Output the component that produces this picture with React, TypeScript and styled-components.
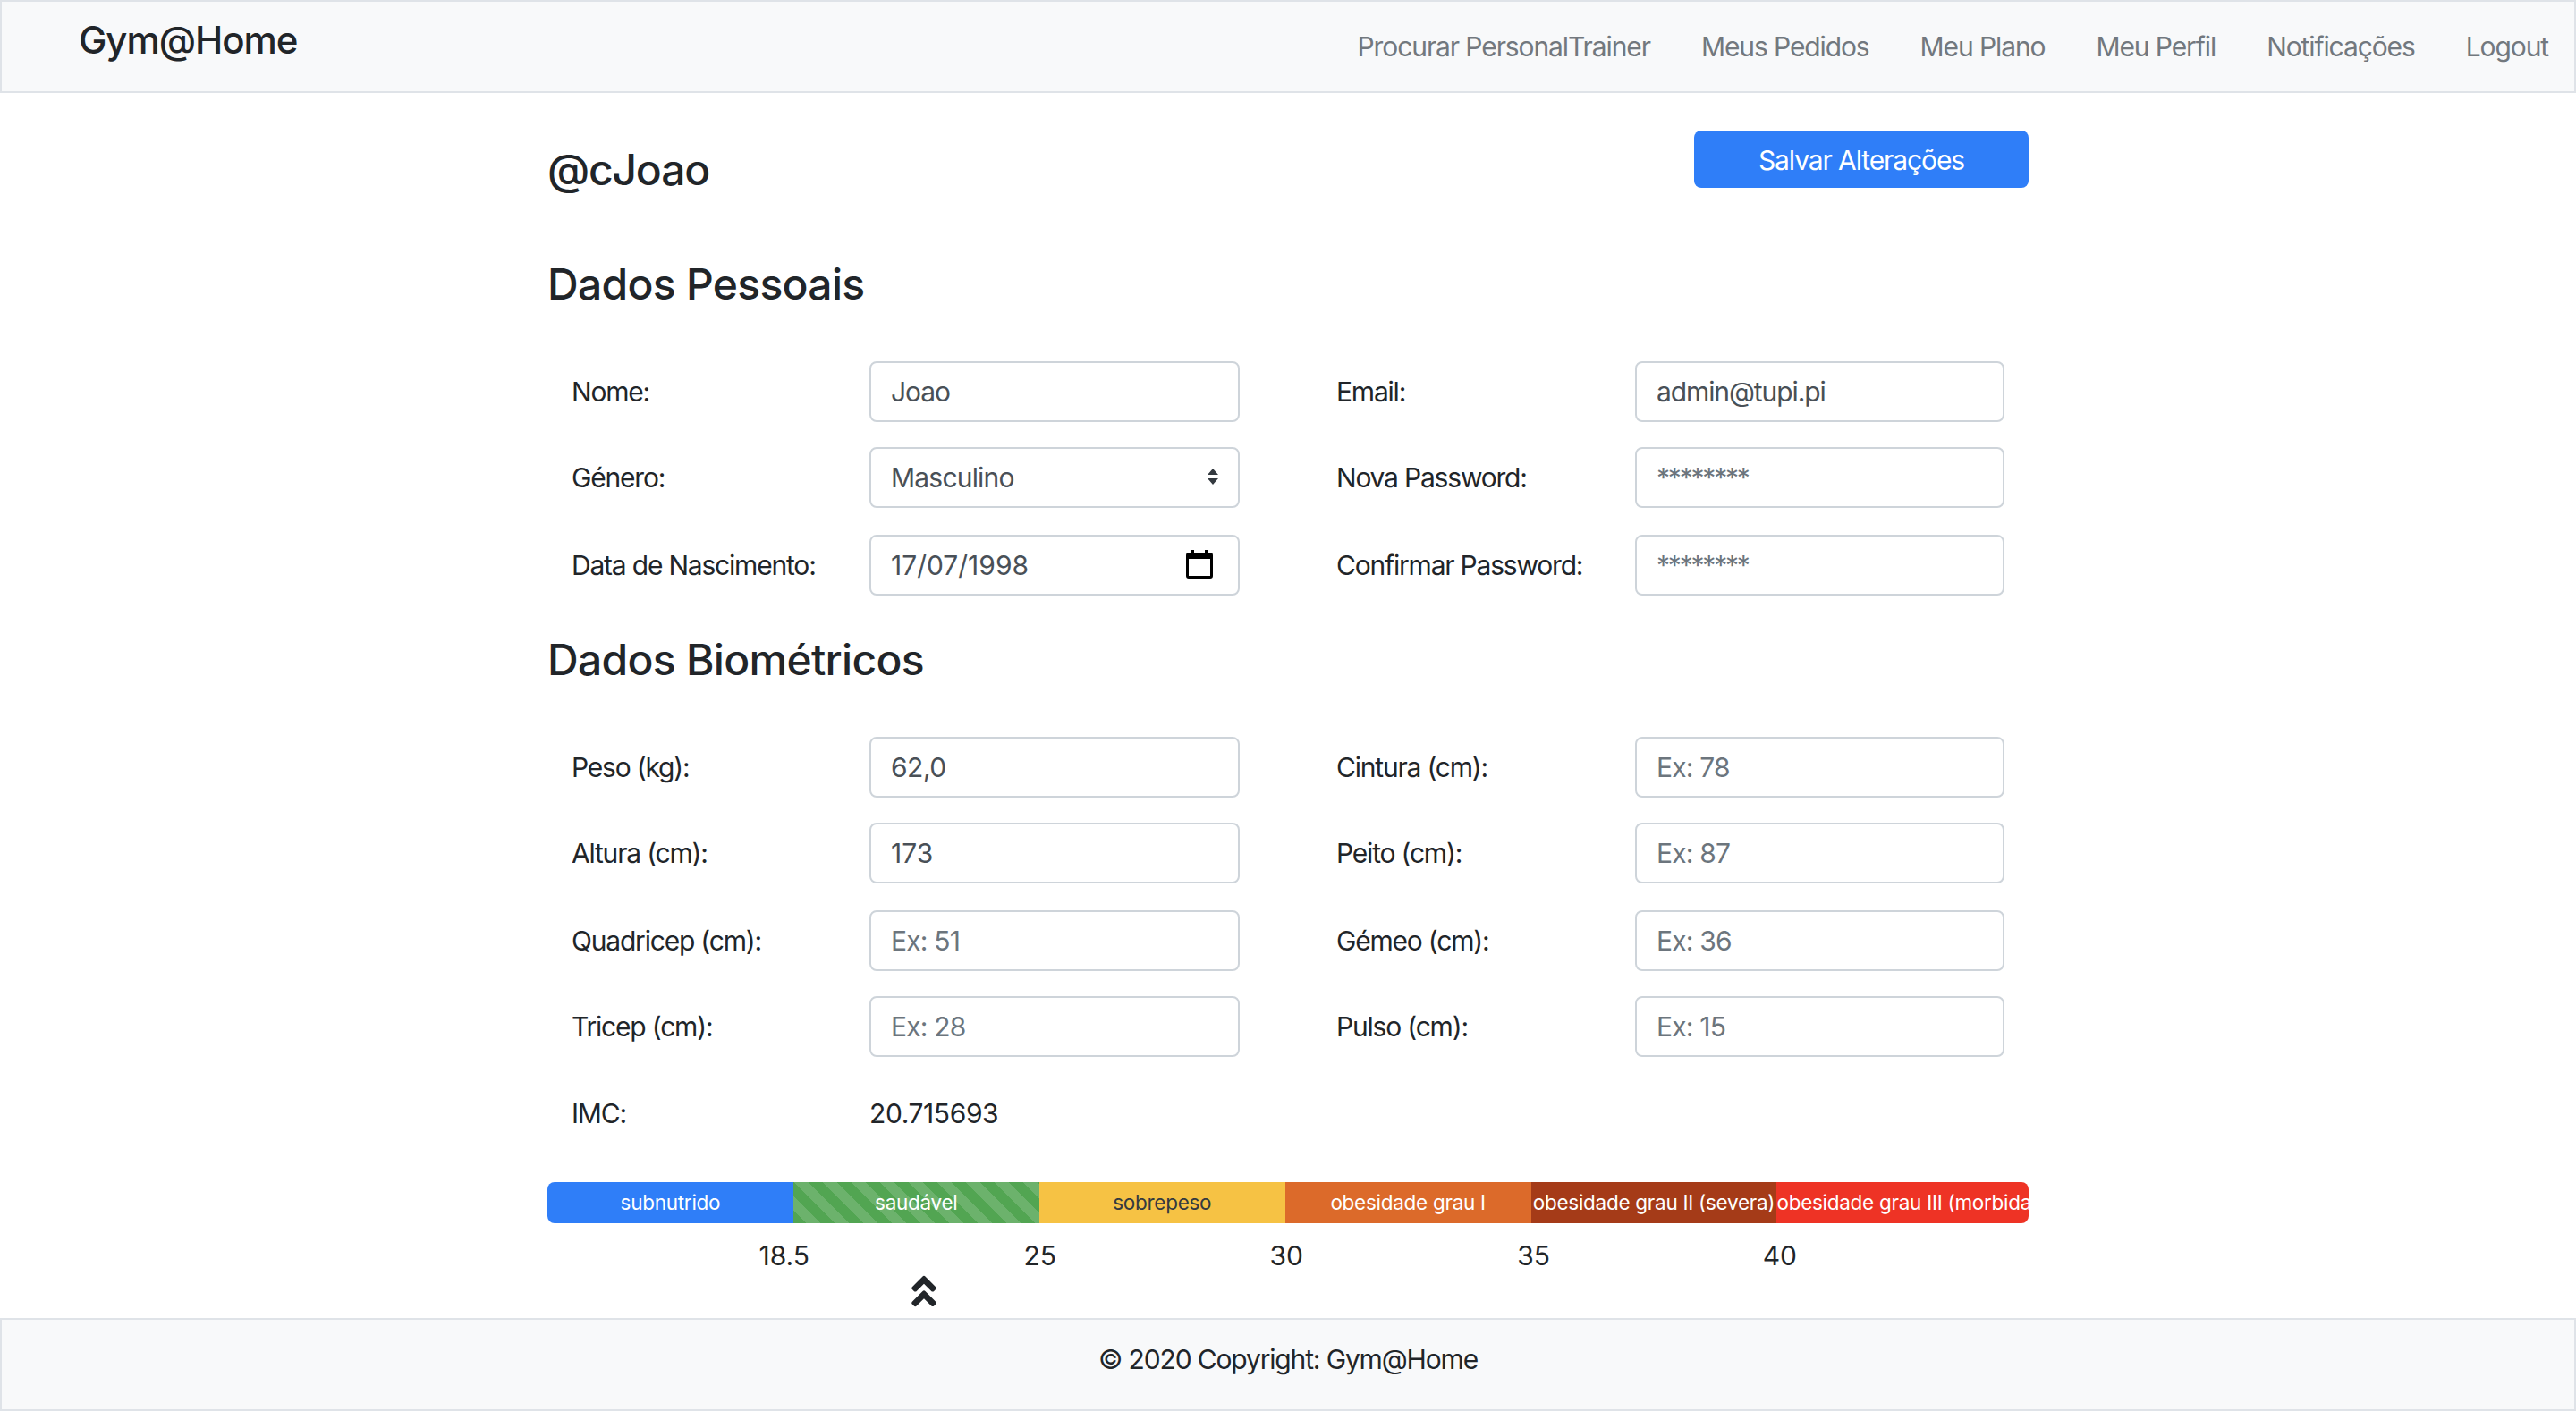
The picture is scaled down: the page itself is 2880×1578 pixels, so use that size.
import React from "react";
import styled, { createGlobalStyle } from "styled-components";
import { FaAngleDoubleUp } from "react-icons/fa";

const Global = createGlobalStyle`
  html, body { margin: 0; padding: 0; background: #fff; }
  body { font-family: Inter, "Liberation Sans", sans-serif; color: #212529; font-size: 30px; letter-spacing: -1.1px; }
  * { box-sizing: border-box; }
`;

const Page = styled.div`
  height: 1578px;
  display: flex;
  flex-direction: column;
`;

const Bar = styled.div`
  height: 104px;
  flex: none;
  background: #f8f9fa;
  border: 2px solid #dfe3e8;
`;

const NavBar = styled(Bar)`
  display: flex;
  justify-content: space-between;
  padding: 0 29px 0 86px;
`;

const Brand = styled.div`
  font-size: 42px;
  font-weight: 500;
  letter-spacing: -1.05px;
  line-height: 48px;
  margin-top: 19px;
`;

const NavList = styled.nav`
  display: flex;
  gap: 57px;
  margin-top: 30px;
`;

const NavLink = styled.a`
  line-height: 40px;
  color: #72787e;
`;

const Main = styled.main`
  flex: 1;
  width: 1656px;
  margin: 0 auto;
`;

const Head = styled.div`
  display: flex;
  justify-content: space-between;
  align-items: flex-start;
  padding-top: 42px;
  height: 184px;
`;

const UserName = styled.h1`
  margin: 14px 0 0;
  font-size: 48px;
  line-height: 60px;
  font-weight: 550;
  letter-spacing: -1.2px;
`;

const SaveButton = styled.button`
  width: 374px;
  height: 64px;
  border: 0;
  border-radius: 8px;
  background: #2f7ef8;
  color: #fff;
  font: 400 30px/64px Inter, "Liberation Sans", sans-serif;
  letter-spacing: -1.1px;
`;

const SectionTitle = styled.h2<{ $top: number }>`
  margin: ${(p) => p.$top}px 0 56px;
  height: 60px;
  font-size: 48px;
  line-height: 60px;
  font-weight: 550;
  letter-spacing: -0.7px;
`;

const FieldRow = styled.div<{ $top?: number }>`
  display: grid;
  grid-template-columns: 333px 414px 442px 413px;
  padding-left: 27px;
  margin-top: ${(p) => p.$top ?? 0}px;
  height: 68px;
  align-items: center;
`;

const Label = styled.label<{ $right?: boolean }>`
  line-height: 40px;
  white-space: nowrap;
  letter-spacing: -1.2px;
  margin-left: ${(p) => (p.$right ? "108px" : "0")};
`;

const Control = styled.div`
  position: relative;
  height: 68px;
`;

const fieldCss = `
  width: 100%;
  height: 68px;
  border: 2px solid #ced4da;
  border-radius: 8px;
  padding: 0 22px;
  background: #fff;
  color: #495057;
  font: 400 30px Inter, "Liberation Sans", sans-serif;
  outline: none;
  &::placeholder { color: #6c757d; opacity: 1; }
`;

const Input = styled.input<{ $spacing: number }>`
  ${fieldCss}
  letter-spacing: ${(p) => p.$spacing}px;
`;

const Select = styled.select`
  ${fieldCss}
  appearance: none;
  letter-spacing: -0.8px;
`;

const ControlIcon = styled.svg`
  position: absolute;
  pointer-events: none;
`;

const SelectArrows = styled(ControlIcon)`
  right: 22px;
  top: 24px;
  width: 16px;
  height: 18px;
`;

const CalendarIcon = styled(ControlIcon)`
  right: 30px;
  top: 17px;
  width: 30px;
  height: 32px;
`;

const ImcValue = styled.div`
  line-height: 40px;
  letter-spacing: -0.4px;
`;

const Progress = styled.div`
  display: grid;
  grid-template-columns: repeat(5, 16.6%) 1fr;
  height: 46px;
  margin-top: 43px;
  border-radius: 8px;
  overflow: hidden;
`;

const Segment = styled.div<{ $bg: string; $dark?: boolean; $striped?: boolean }>`
  background-color: ${(p) => p.$bg};
  ${(p) =>
    p.$striped
      ? `background-image: linear-gradient(45deg, rgba(255,255,255,.15) 25%, transparent 25%, transparent 50%, rgba(255,255,255,.15) 50%, rgba(255,255,255,.15) 75%, transparent 75%, transparent);
         background-size: 32px 32px;`
      : ""}
  color: ${(p) => (p.$dark ? "#343a40" : "#fff")};
  font-size: 22.5px;
  letter-spacing: -0.28px;
  line-height: 46px;
  text-align: center;
  white-space: nowrap;
  overflow: hidden;
`;

const Scale = styled.div`
  display: grid;
  grid-template-columns: repeat(6, 276px);
  margin-top: 16px;
  padding-left: 17px;
  width: 1673px;
`;

const ScaleValue = styled.div`
  text-align: right;
  letter-spacing: 0;
  line-height: 40px;
`;

const Marker = styled.div<{ $offset: number }>`
  display: flex;
  height: 34px;
  margin-top: 3px;
  padding-left: ${(p) => p.$offset}px;
  color: #212529;
  font-size: 44px;
  align-items: center;
`;

const Footer = styled(Bar)`
  display: flex;
  align-items: center;
  justify-content: center;
  padding-bottom: 12px;
  letter-spacing: -1.15px;
`;

const navItems = ["Procurar PersonalTrainer", "Meus Pedidos", "Meu Plano", "Meu Perfil", "Notificações", "Logout"];

const segments = [
  { text: "subnutrido", bg: "#2f7ef8" },
  { text: "saudável", bg: "#52a552", striped: true },
  { text: "sobrepeso", bg: "#f6c244", dark: true },
  { text: "obesidade grau I", bg: "#dc6a2a" },
  { text: "obesidade grau II (severa)", bg: "#a53b18" },
  { text: "obesidade grau III (morbida)", bg: "#ee3325" },
];

const scale = ["18.5", "25", "30", "35", "40"];

const Arrows = () => (
  <SelectArrows viewBox="0 0 16 18">
    <path d="M8 0l6 7H2zM8 18l-6-7h12z" fill="#343a40" />
  </SelectArrows>
);

const Calendar = () => (
  <CalendarIcon viewBox="0 0 30 32">
    <path
      fillRule="evenodd"
      fill="#000"
      d="M6 0h3v3h12V0h3v3h3a3 3 0 0 1 3 3v23a3 3 0 0 1-3 3H3a3 3 0 0 1-3-3V6a3 3 0 0 1 3-3h3zM3 10v19h24V10z"
    />
  </CalendarIcon>
);

type Cell = { label: string; value?: string; placeholder?: string; kind?: "select" | "date"; spacing?: number };

const Field = ({ cell, right }: { cell: Cell; right?: boolean }) => (
  <>
    <Label $right={right}>{cell.label}</Label>
    <Control>
      {cell.kind === "select" ? (
        <>
          <Select defaultValue={cell.value}>
            <option>{cell.value}</option>
            <option>Feminino</option>
          </Select>
          <Arrows />
        </>
      ) : (
        <>
          <Input defaultValue={cell.value} placeholder={cell.placeholder} $spacing={cell.spacing ?? -0.8} />
          {cell.kind === "date" ? <Calendar /> : null}
        </>
      )}
    </Control>
  </>
);

const personal: [Cell, Cell, number][] = [
  [{ label: "Nome:", value: "Joao", spacing: -1.1 }, { label: "Email:", value: "admin@tupi.pi", spacing: -1.1 }, 0],
  [{ label: "Género:", value: "Masculino", kind: "select" }, { label: "Nova Password:", placeholder: "********", spacing: -2.2 }, 28],
  [{ label: "Data de Nascimento:", value: "17/07/1998", kind: "date", spacing: 0 }, { label: "Confirmar Password:", placeholder: "********", spacing: -2.2 }, 30],
];

const biometric: [Cell, Cell, number][] = [
  [{ label: "Peso (kg):", value: "62,0", spacing: -0.5 }, { label: "Cintura (cm):", placeholder: "Ex: 78" }, 0],
  [{ label: "Altura (cm):", value: "173", spacing: 0 }, { label: "Peito (cm):", placeholder: "Ex: 87" }, 28],
  [{ label: "Quadricep (cm):", placeholder: "Ex: 51" }, { label: "Gémeo (cm):", placeholder: "Ex: 36" }, 30],
  [{ label: "Tricep (cm):", placeholder: "Ex: 28" }, { label: "Pulso (cm):", placeholder: "Ex: 15" }, 28],
];

const Rows = ({ rows }: { rows: [Cell, Cell, number][] }) => (
  <>
    {rows.map(([a, b, top]) => (
      <FieldRow key={a.label} $top={top}>
        <Field cell={a} />
        <Field cell={b} right />
      </FieldRow>
    ))}
  </>
);

export default function App() {
  return (
    <Page>
      <Global />
      <NavBar>
        <Brand>Gym@Home</Brand>
        <NavList>
          {navItems.map((n) => (
            <NavLink key={n}>{n}</NavLink>
          ))}
        </NavList>
      </NavBar>
      <Main>
        <Head>
          <UserName>@cJoao</UserName>
          <SaveButton>Salvar Alterações</SaveButton>
        </Head>
        <SectionTitle $top={0}>Dados Pessoais</SectionTitle>
        <Rows rows={personal} />
        <SectionTitle $top={42}>Dados Biométricos</SectionTitle>
        <Rows rows={biometric} />
        <FieldRow $top={29}>
          <Label>IMC:</Label>
          <ImcValue>20.715693</ImcValue>
        </FieldRow>
        <Progress>
          {segments.map((s) => (
            <Segment key={s.text} $bg={s.bg} $dark={s.dark} $striped={s.striped}>
              {s.text}
            </Segment>
          ))}
        </Progress>
        <Scale>
          {scale.map((v) => (
            <ScaleValue key={v}>{v}</ScaleValue>
          ))}
        </Scale>
        <Marker $offset={399}>
          <FaAngleDoubleUp />
        </Marker>
      </Main>
      <Footer>© 2020 Copyright: Gym@Home</Footer>
    </Page>
  );
}
